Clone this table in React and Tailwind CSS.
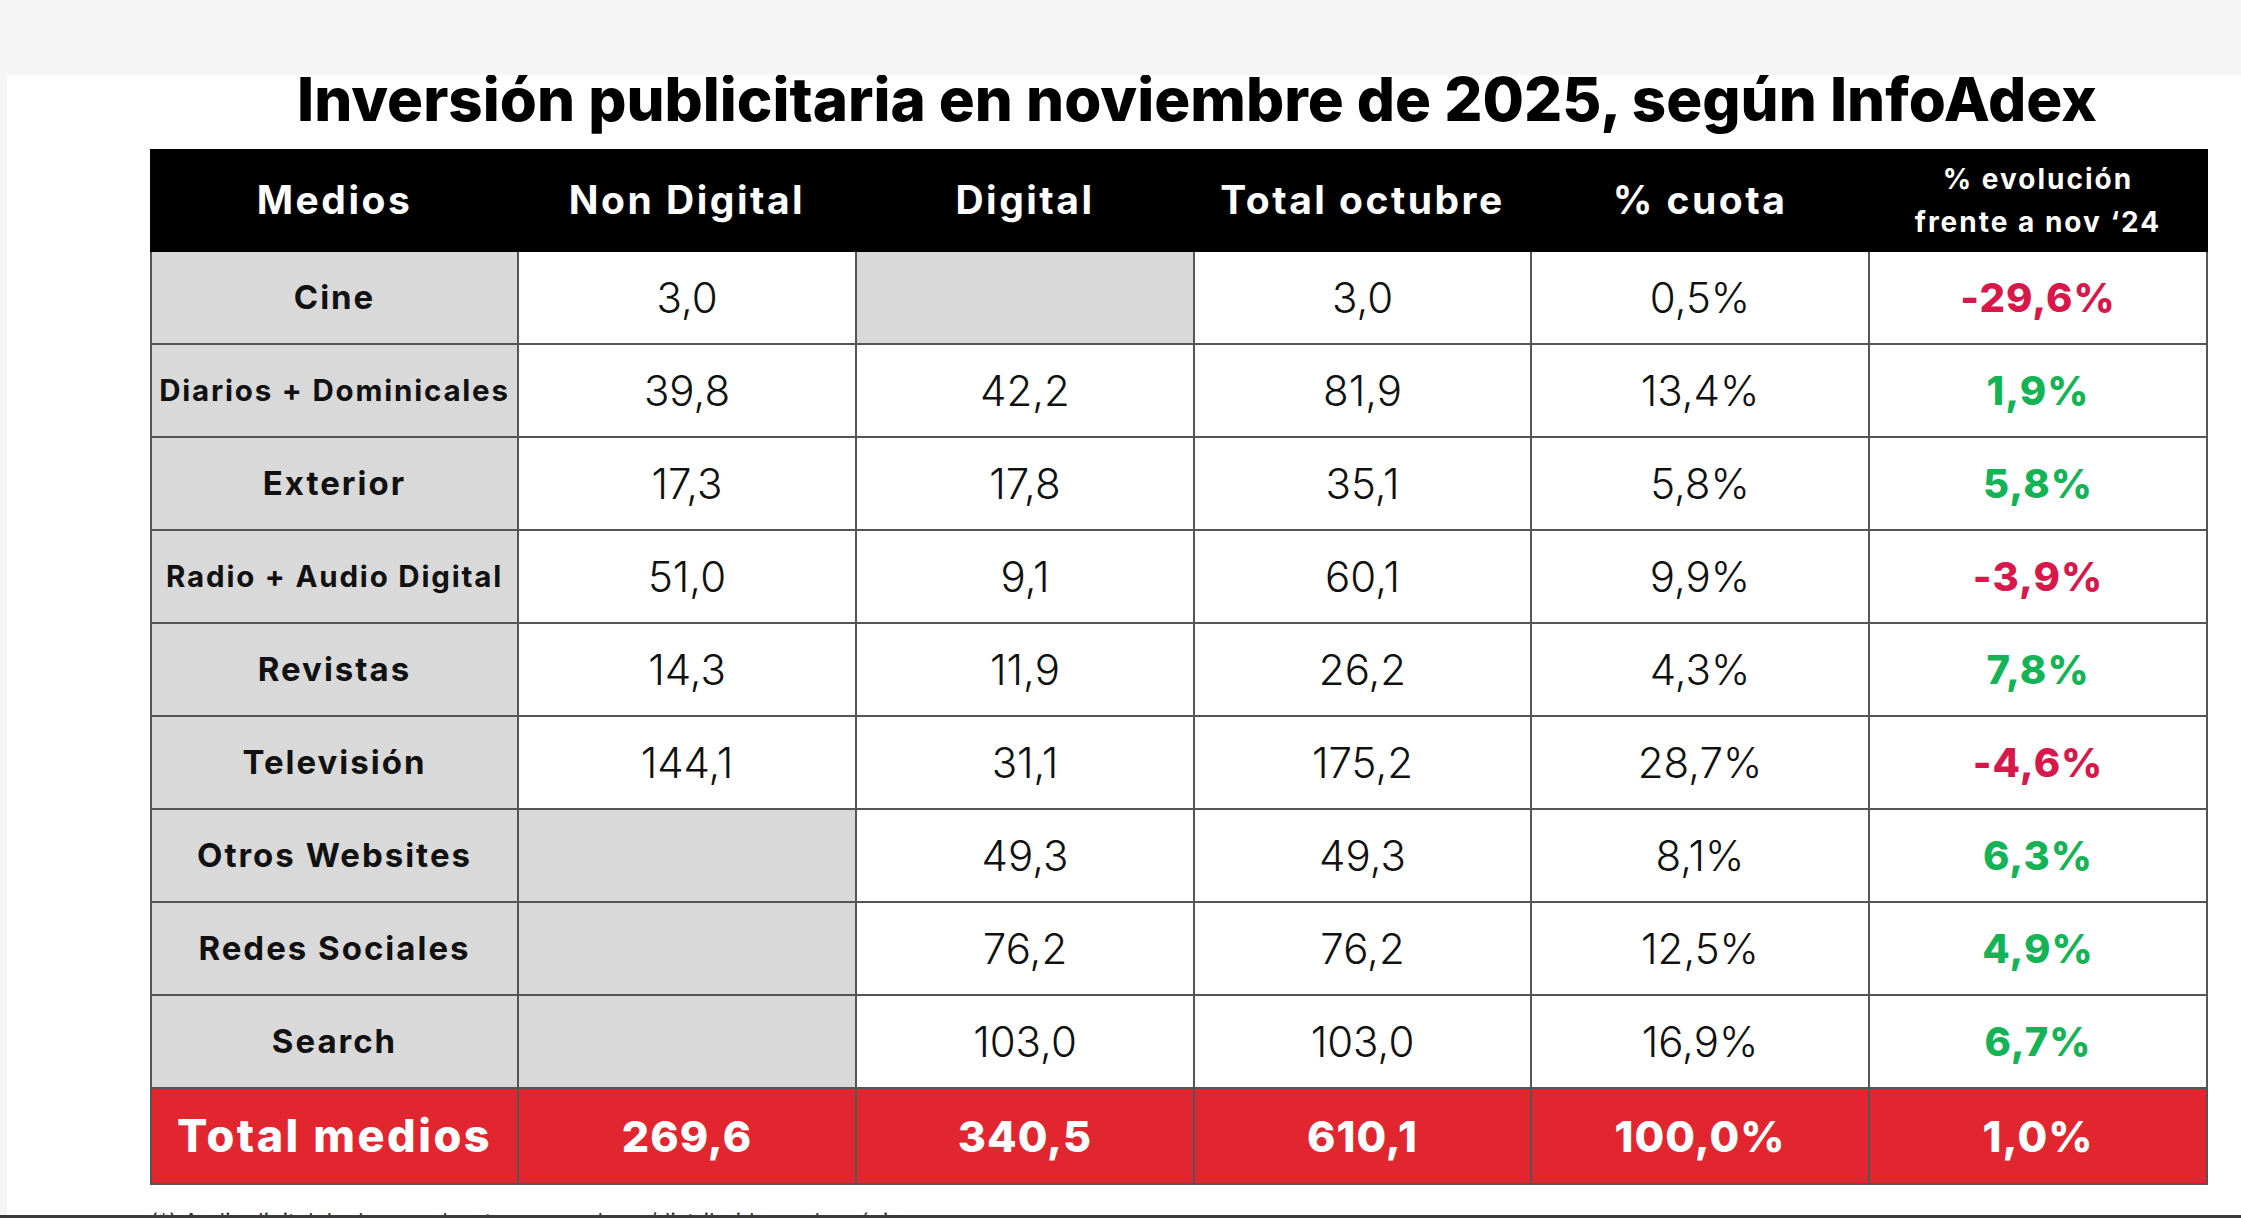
const rows = [
    { name: "Cine", nd: "3,0", d: null, total: "3,0", cuota: "0,5%", evo: "-29,6%", up: false },
    { name: "Diarios + Dominicales", small: true, nd: "39,8", d: "42,2", total: "81,9", cuota: "13,4%", evo: "1,9%", up: true },
    { name: "Exterior", nd: "17,3", d: "17,8", total: "35,1", cuota: "5,8%", evo: "5,8%", up: true },
    { name: "Radio + Audio Digital", small: true, nd: "51,0", d: "9,1", total: "60,1", cuota: "9,9%", evo: "-3,9%", up: false },
    { name: "Revistas", nd: "14,3", d: "11,9", total: "26,2", cuota: "4,3%", evo: "7,8%", up: true },
    { name: "Televisión", nd: "144,1", d: "31,1", total: "175,2", cuota: "28,7%", evo: "-4,6%", up: false },
    { name: "Otros Websites", nd: null, d: "49,3", total: "49,3", cuota: "8,1%", evo: "6,3%", up: true },
    { name: "Redes Sociales", nd: null, d: "76,2", total: "76,2", cuota: "12,5%", evo: "4,9%", up: true },
    { name: "Search", nd: null, d: "103,0", total: "103,0", cuota: "16,9%", evo: "6,7%", up: true },
];

const bold = { fontFamily: '"Inter", "Liberation Sans", sans-serif' };

function NumCell({ value }) {
    if (value === null) {
        return <td className="border-2 border-[#555] bg-[#d9d9d9]"></td>;
    }
    return (
        <td className="border-2 border-[#555] bg-white text-center text-[42px] font-light text-[#111]">
            {value}
        </td>
    );
}

export default function App() {
    return (
        <div className="relative h-screen overflow-hidden bg-[#f5f5f5]" style={bold}>
            <div className="h-[75px] bg-[#f5f5f5]"></div>
            <div className="ml-[7px] h-[1143px] overflow-hidden bg-white pl-[143px]">
                <h1 className="mt-[-6px] w-[2056px] pl-[38px] text-center text-[60px] font-extrabold leading-[60px] text-black">
                    Inversión publicitaria en noviembre de 2025, según InfoAdex
                </h1>
                <table className="mt-[20px] border-collapse">
                    <colgroup>
                        <col className="w-[367px]" />
                        <col className="w-[338px]" />
                        <col className="w-[338px]" />
                        <col className="w-[337px]" />
                        <col className="w-[338px]" />
                        <col className="w-[338px]" />
                    </colgroup>
                    <thead>
                        <tr className="h-[101px] bg-black text-white">
                            {["Medios", "Non Digital", "Digital", "Total octubre", "% cuota"].map((h) => (
                                <th key={h} className="border-2 border-black text-center text-[39px] font-bold tracking-[2.5px]">
                                    {h}
                                </th>
                            ))}
                            <th className="border-2 border-black text-center text-[28px] font-bold leading-[43px] tracking-[2px]">
                                % evolución
                                <br />
                                frente a nov ‘24
                            </th>
                        </tr>
                    </thead>
                    <tbody>
                        {rows.map((r) => (
                            <tr key={r.name} className="h-[93px]">
                                <td
                                    className={
                                        r.small
                                            ? "border-2 border-[#555] bg-[#d9d9d9] text-center text-[29.5px] font-bold tracking-[1.8px] text-[#111]"
                                            : "border-2 border-[#555] bg-[#d9d9d9] text-center text-[33px] font-bold tracking-[2px] text-[#111]"
                                    }
                                >
                                    {r.name}
                                </td>
                                <NumCell value={r.nd} />
                                <NumCell value={r.d} />
                                <NumCell value={r.total} />
                                <NumCell value={r.cuota} />
                                <td
                                    className={
                                        r.up
                                            ? "border-2 border-[#555] bg-white text-center text-[40px] font-extrabold tracking-[1px] text-[#14b356]"
                                            : "border-2 border-[#555] bg-white text-center text-[40px] font-extrabold tracking-[1px] text-[#d8174a]"
                                    }
                                >
                                    {r.evo}
                                </td>
                            </tr>
                        ))}
                        <tr className="h-[96px] bg-[#e1262f] text-white">
                            <td className="border-2 border-[#555] text-center text-[45px] font-extrabold tracking-[2.5px]">
                                Total medios
                            </td>
                            {["269,6", "340,5", "610,1", "100,0%", "1,0%"].map((v) => (
                                <td key={v} className="border-2 border-[#555] text-center text-[43px] font-extrabold tracking-[1px]">
                                    {v}
                                </td>
                            ))}
                        </tr>
                    </tbody>
                </table>
                <p className="mt-[20px] text-[21.5px] tracking-[0.3px] text-[#333]">
                    (*) Audio digital: Incluye podcast y agregadores/distribuidores de música
                </p>
            </div>
            <div className="absolute bottom-0 left-0 right-0 h-[3px] bg-[#3a3a3a]"></div>
        </div>
    );
}
